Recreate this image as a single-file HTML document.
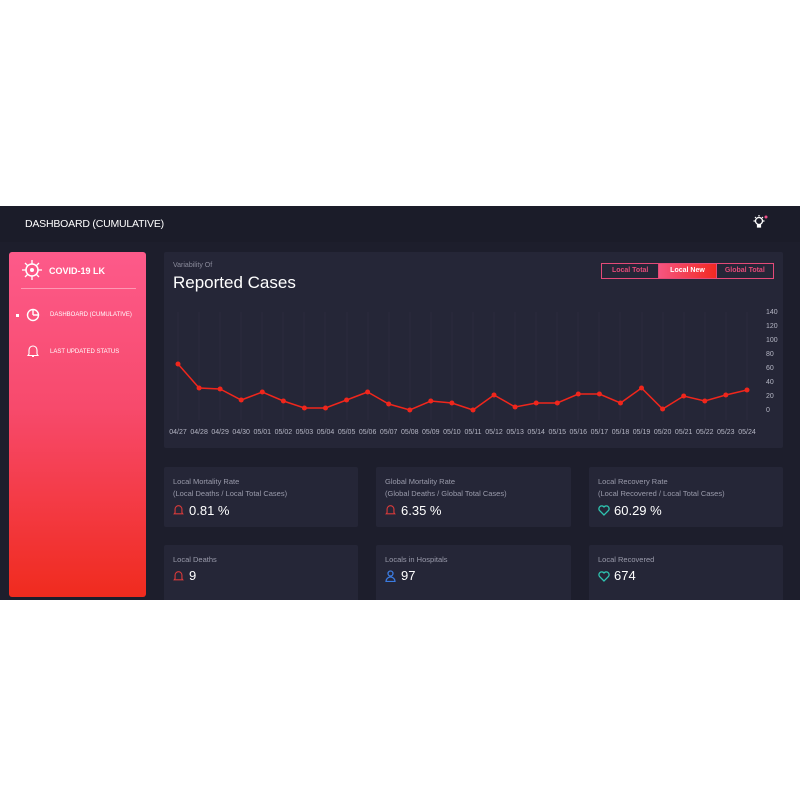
<!DOCTYPE html>
<html><head><style>
*{margin:0;padding:0;box-sizing:border-box}
body{width:800px;height:800px;background:#fff;font-family:"Liberation Sans",sans-serif;position:relative;overflow:hidden}
.dash{position:absolute;left:0;top:206px;width:800px;height:394px;background:#1d1e2c;overflow:hidden}
.hdr{position:absolute;left:0;top:0;width:800px;height:36px;background:#1b1c29}
.hdr .t{position:absolute;left:25px;top:12px;color:#fff;font-size:10.5px;letter-spacing:-.2px}
.side{position:absolute;left:9px;top:46px;width:137px;height:345px;border-radius:3px;background:linear-gradient(#fd5a8a,#f74a6c 45%,#f02b1e)}
.side .logo{position:absolute;left:15px;top:10px;color:#fff;font-size:9px;font-weight:bold}
.side hr{position:absolute;left:12px;top:36px;width:115px;border:0;border-top:1px solid rgba(255,255,255,.4)}
.side .it{position:absolute;left:41px;color:#fff;font-size:6px}
.card{position:absolute;background:#252637;border-radius:2px}
.card .l{position:absolute;left:9px;color:#9a9bab;font-size:7.5px}
.card .v{position:absolute;left:9px;color:#fff;font-size:13px}
.btns{position:absolute;left:437px;top:11px;width:173px;height:16px;border:1px solid #e44a78;display:flex;font-size:7px;font-weight:bold}
.btns div{flex:1;text-align:center;line-height:14px;color:#e44a78;border-right:1px solid #e44a78;height:14px}
.btns div:last-child{border-right:0}
.btns .on{background:linear-gradient(90deg,#f65580,#f22a22);color:#fff}
</style></head><body>
<div class="dash">
<div class="hdr"><div class="t">DASHBOARD (CUMULATIVE)</div>
<svg style="position:absolute;left:750px;top:8px" width="20" height="16" viewBox="0 0 20 16"><circle cx="9" cy="7" r="3.5" fill="none" stroke="#fff" stroke-width="1.3"/><path d="M7.5 11h3v2h-3z M9 1v1.5 M3.5 7h1.5 M13 7h1.5 M5 3l1 1 M13 3l-1 1" stroke="#fff" stroke-width="1.2" fill="#fff"/><circle cx="16" cy="3" r="1.5" fill="#f0508a"/></svg></div>
<div class="side">
<svg style="position:absolute;left:13px;top:8px" width="20" height="20" viewBox="0 0 20 20"><circle cx="10" cy="10" r="6" fill="none" stroke="#fff" stroke-width="1.5"/><g stroke="#fff" stroke-width="1.3"><path d="M10 0v4M10 16v4M0 10h4M16 10h4M3 3l3 3M17 3l-3 3M3 17l3-3M17 17l-3-3"/></g><circle cx="10" cy="10" r="2" fill="#fff"/></svg>
<div class="logo" style="left:40px;top:14px">COVID-19 LK</div>
<hr>
<div style="position:absolute;left:7px;top:62px;width:3px;height:3px;background:#fff"></div>
<svg style="position:absolute;left:17px;top:56px" width="14" height="14" viewBox="0 0 14 14"><circle cx="7" cy="7" r="5.5" fill="none" stroke="#fff" stroke-width="1.4"/><path d="M7 7V1.5M7 7h5.5" stroke="#fff" stroke-width="1.4"/></svg>
<div class="it" style="top:60px">DASHBOARD (CUMULATIVE)</div>
<svg style="position:absolute;left:18px;top:92px" width="12" height="14" viewBox="0 0 12 14"><path d="M2 10V6a4 4 0 0 1 8 0v4l1 1.5H1z M5 12.5h2" fill="none" stroke="#fff" stroke-width="1.1"/></svg>
<div class="it" style="top:97px">LAST UPDATED STATUS</div>
</div>
<div class="card" style="left:164px;top:46px;width:619px;height:196px">
<div style="position:absolute;left:9px;top:10px;color:#8a8b9b;font-size:7px">Variability Of</div>
<div style="position:absolute;left:9px;top:21px;color:#fff;font-size:17px">Reported Cases</div>
<div class="btns"><div>Local Total</div><div class="on">Local New</div><div>Global Total</div></div>
</div>
<svg style="position:absolute;left:0;top:0" width="800" height="394" viewBox="0 206 800 394">
<g stroke="#2a2b3d" stroke-width="1">
<path d="M178 312V420M199 312V420M220 312V420M241 312V420M262 312V420M283 312V420M304 312V420M325 312V420M347 312V420M368 312V420M389 312V420M410 312V420M431 312V420M452 312V420M473 312V420M494 312V420M515 312V420M536 312V420M557 312V420M578 312V420M599 312V420M620 312V420M642 312V420M663 312V420M684 312V420M705 312V420M726 312V420M747 312V420"/></g>
<polyline fill="none" stroke="#f0261c" stroke-width="1.5" points="178,364 199.1,388 220.1,389 241.2,400 262.3,392 283.4,401 304.4,408 325.5,408 346.6,400 367.6,392 388.7,404 409.8,410 430.8,401 451.9,403 473,410 494,395 515.1,407 536.2,403 557.3,403 578.3,394 599.4,394 620.5,403 641.5,388 662.6,409 683.7,396 704.8,401 725.8,395 747,390"/>
<g fill="#f0261c">
<circle cx="178" cy="364" r="2.5"/><circle cx="199.1" cy="388" r="2.5"/><circle cx="220.1" cy="389" r="2.5"/><circle cx="241.2" cy="400" r="2.5"/><circle cx="262.3" cy="392" r="2.5"/><circle cx="283.4" cy="401" r="2.5"/><circle cx="304.4" cy="408" r="2.5"/><circle cx="325.5" cy="408" r="2.5"/><circle cx="346.6" cy="400" r="2.5"/><circle cx="367.6" cy="392" r="2.5"/><circle cx="388.7" cy="404" r="2.5"/><circle cx="409.8" cy="410" r="2.5"/><circle cx="430.8" cy="401" r="2.5"/><circle cx="451.9" cy="403" r="2.5"/><circle cx="473" cy="410" r="2.5"/><circle cx="494" cy="395" r="2.5"/><circle cx="515.1" cy="407" r="2.5"/><circle cx="536.2" cy="403" r="2.5"/><circle cx="557.3" cy="403" r="2.5"/><circle cx="578.3" cy="394" r="2.5"/><circle cx="599.4" cy="394" r="2.5"/><circle cx="620.5" cy="403" r="2.5"/><circle cx="641.5" cy="388" r="2.5"/><circle cx="662.6" cy="409" r="2.5"/><circle cx="683.7" cy="396" r="2.5"/><circle cx="704.8" cy="401" r="2.5"/><circle cx="725.8" cy="395" r="2.5"/><circle cx="747" cy="390" r="2.5"/></g>
<g fill="#b5b6c4" font-size="7" font-family="Liberation Sans,sans-serif">
<text x="766" y="314">140</text><text x="766" y="328">120</text><text x="766" y="342">100</text><text x="766" y="356">80</text><text x="766" y="370">60</text><text x="766" y="384">40</text><text x="766" y="398">20</text><text x="766" y="412">0</text>
</g>
<g fill="#b5b6c4" font-size="7" font-family="Liberation Sans,sans-serif" text-anchor="middle">
<text x="178" y="434">04/27</text><text x="199.1" y="434">04/28</text><text x="220.1" y="434">04/29</text><text x="241.2" y="434">04/30</text><text x="262.3" y="434">05/01</text><text x="283.4" y="434">05/02</text><text x="304.4" y="434">05/03</text><text x="325.5" y="434">05/04</text><text x="346.6" y="434">05/05</text><text x="367.6" y="434">05/06</text><text x="388.7" y="434">05/07</text><text x="409.8" y="434">05/08</text><text x="430.8" y="434">05/09</text><text x="451.9" y="434">05/10</text><text x="473" y="434">05/11</text><text x="494" y="434">05/12</text><text x="515.1" y="434">05/13</text><text x="536.2" y="434">05/14</text><text x="557.3" y="434">05/15</text><text x="578.3" y="434">05/16</text><text x="599.4" y="434">05/17</text><text x="620.5" y="434">05/18</text><text x="641.5" y="434">05/19</text><text x="662.6" y="434">05/20</text><text x="683.7" y="434">05/21</text><text x="704.8" y="434">05/22</text><text x="725.8" y="434">05/23</text><text x="747" y="434">05/24</text>
</g></svg>

<div class="card" style="left:164px;top:261px;width:194px;height:60px"><div class="l" style="top:10px">Local Mortality Rate</div><div class="l" style="top:22px">(Local Deaths / Local Total Cases)</div>
<svg style="position:absolute;left:9px;top:37px" width="11" height="12" viewBox="0 0 12 14"><path d="M2 10V6a4 4 0 0 1 8 0v4l1 1.5H1z" fill="none" stroke="#d83a3a" stroke-width="1.3"/></svg><div class="v" style="left:25px;top:36px">0.81 %</div></div>
<div class="card" style="left:376px;top:261px;width:195px;height:60px"><div class="l" style="top:10px">Global Mortality Rate</div><div class="l" style="top:22px">(Global Deaths / Global Total Cases)</div>
<svg style="position:absolute;left:9px;top:37px" width="11" height="12" viewBox="0 0 12 14"><path d="M2 10V6a4 4 0 0 1 8 0v4l1 1.5H1z" fill="none" stroke="#d83a3a" stroke-width="1.3"/></svg><div class="v" style="left:25px;top:36px">6.35 %</div></div>
<div class="card" style="left:589px;top:261px;width:194px;height:60px"><div class="l" style="top:10px">Local Recovery Rate</div><div class="l" style="top:22px">(Local Recovered / Local Total Cases)</div>
<svg style="position:absolute;left:9px;top:38px" width="12" height="11" viewBox="0 0 12 11"><path d="M6 10L1.5 5.5A2.6 2.6 0 0 1 6 2a2.6 2.6 0 0 1 4.5 3.5z" fill="none" stroke="#2ec4b0" stroke-width="1.3"/></svg><div class="v" style="left:25px;top:36px">60.29 %</div></div>

<div class="card" style="left:164px;top:339px;width:194px;height:60px"><div class="l" style="top:10px">Local Deaths</div>
<svg style="position:absolute;left:9px;top:25px" width="11" height="12" viewBox="0 0 12 14"><path d="M2 10V6a4 4 0 0 1 8 0v4l1 1.5H1z" fill="none" stroke="#d83a3a" stroke-width="1.3"/></svg><div class="v" style="left:25px;top:23px">9</div></div>
<div class="card" style="left:376px;top:339px;width:195px;height:60px"><div class="l" style="top:10px">Locals in Hospitals</div>
<svg style="position:absolute;left:9px;top:25px" width="11" height="12" viewBox="0 0 11 12"><circle cx="5.5" cy="3.5" r="2.5" fill="none" stroke="#3b7be0" stroke-width="1.3"/><path d="M1 11.5a4.5 4.5 0 0 1 9 0z" fill="none" stroke="#3b7be0" stroke-width="1.3"/></svg><div class="v" style="left:25px;top:23px">97</div></div>
<div class="card" style="left:589px;top:339px;width:194px;height:60px"><div class="l" style="top:10px">Local Recovered</div>
<svg style="position:absolute;left:9px;top:26px" width="12" height="11" viewBox="0 0 12 11"><path d="M6 10L1.5 5.5A2.6 2.6 0 0 1 6 2a2.6 2.6 0 0 1 4.5 3.5z" fill="none" stroke="#2ec4b0" stroke-width="1.3"/></svg><div class="v" style="left:25px;top:23px">674</div></div>
</div>
</body></html>
